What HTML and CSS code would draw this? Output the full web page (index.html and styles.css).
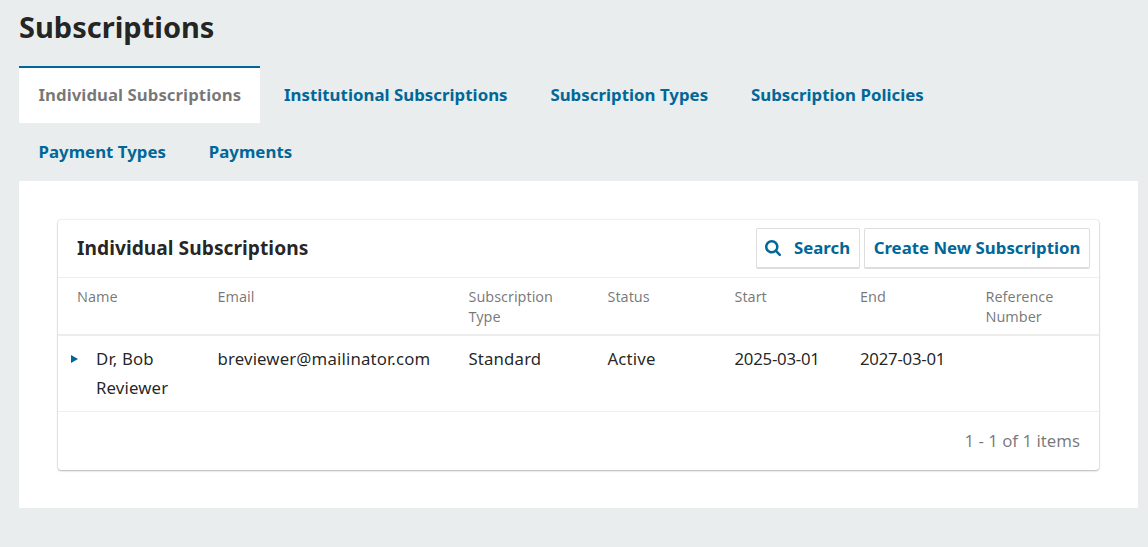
FILE: index.html
```html
<!DOCTYPE html>
<html lang="en">
<head>
<meta charset="utf-8">
<title>Subscriptions</title>
<link rel="stylesheet" href="styles.css">
</head>
<body>
<main class="page">
  <h1 class="page-title">Subscriptions</h1>
  <nav class="tabs">
    <a class="tab tab-active">Individual Subscriptions</a>
    <a class="tab">Institutional Subscriptions</a>
    <a class="tab">Subscription Types</a>
    <a class="tab">Subscription Policies</a>
    <a class="tab">Payment Types</a>
    <a class="tab">Payments</a>
  </nav>
  <section class="panel">
    <div class="grid-card">
      <header class="grid-header">
        <h2 class="grid-title">Individual Subscriptions</h2>
        <div class="actions">
          <button class="button button-search"><svg class="search-icon" viewBox="0 0 1664 1664"><path d="M1152 704q0-185-131.500-316.500T704 256 387.500 387.500 256 704t131.500 316.500T704 1152t316.500-131.500T1152 704zm512 832q0 52-38 90t-90 38q-54 0-90-38l-343-342q-179 124-399 124-143 0-273.500-55.500t-225-150-150-225T0 704t55.500-273.500 150-225 225-150T704 0t273.500 55.500 225 150 150 225T1408 704q0 220-124 399l343 343q37 37 37 90z"/></svg>Search</button>
          <button class="button">Create New Subscription</button>
        </div>
      </header>
      <table class="grid">
        <colgroup><col class="c-name"><col class="c-email"><col class="c-type"><col class="c-status"><col class="c-start"><col class="c-end"><col></colgroup>
        <thead><tr><th>Name</th><th>Email</th><th>Subscription<br>Type</th><th>Status</th><th>Start</th><th>End</th><th>Reference Number</th></tr></thead>
        <tbody><tr><td><div class="name"><svg class="caret" viewBox="0 0 7 8"><path d="M0 0 7 4 0 8z"/></svg><span>Dr, Bob Reviewer</span></div></td><td>breviewer@mailinator.com</td><td>Standard</td><td>Active</td><td class="date">2025-03-01</td><td class="date">2027-03-01</td><td></td></tr></tbody>
      </table>
      <footer class="grid-footer">1 - 1 of 1 items</footer>
    </div>
  </section>
</main>
</body>
</html>
```

FILE: styles.css
```css
* { box-sizing: border-box; }
body { margin: 0; background: #e9eded; color: rgba(0,0,0,.87); font-family: "Noto Sans", sans-serif; font-size: 16.8px; }
.page { padding: 7px 10px 39px 19px; }
.page-title { margin: 0; font-size: 29px; line-height: 40px; font-weight: 700; }
.tabs { display: flex; flex-wrap: wrap; margin-top: 19px; padding-right: 40px; column-gap: 4px; letter-spacing: .04px; }
.tab { height: 57px; padding: 0 19.300px 0 19.500px; line-height: 58px; font-weight: 700; color: #006798; }
.tab-active { background: #fff; color: rgba(0,0,0,.54); box-shadow: inset 0 2px #006798; }
.panel { margin-top: 1px; padding: 39px 39px 38px; background: #fff; }
.grid-card { border-radius: 3px; box-shadow: 0 0 2px rgba(0,0,0,.2), 0 1px 2px rgba(0,0,0,.24); }
.grid-header { display: flex; height: 57px; align-items: center; justify-content: space-between; padding: 0 9px 0 19px; }
.grid-title { margin: 0; padding-bottom: 2px; font-size: 19.2px; line-height: 28px; letter-spacing: .03px; }
.actions { display: flex; gap: 4px; }
.button { height: 41px; padding: 0 8.500px 1px 9px; border: 1px solid #ddd; border-bottom-width: 2px; border-radius: 2px; background: #fff; color: #006798; font: inherit; font-weight: 700; letter-spacing: .02px; white-space: nowrap; }
.button-search { display: flex; align-items: center; gap: 12.500px; padding-left: 8px; }
.search-icon { width: 16px; height: 16px; fill: currentColor; }
.grid { width: 100%; table-layout: fixed; border-collapse: separate; border-spacing: 0; border-top: 1px solid #eee; }
.c-name { width: 150.500px; }
.c-email { width: 251px; }
.c-type { width: 139px; }
.c-status { width: 127px; }
.c-start, .c-end { width: 125.500px; }
.grid th { height: 58px; padding: 9px 9px 7px; vertical-align: top; text-align: left; font-size: 14.4px; line-height: 20px; font-weight: 400; color: rgba(0,0,0,.54); border-bottom: 2px solid #ededed; }
.grid td { height: 76px; padding: 8px 9px; vertical-align: top; line-height: 29px; letter-spacing: .14px; border-bottom: 1px solid #eee; }
.grid .date { letter-spacing: -.25px; }
.grid th:first-child { padding-left: 19px; }
.grid td:first-child { padding-left: 13px; }
.name { display: flex; gap: 18px; }
.caret { width: 7px; height: 8px; flex: none; margin-top: 11px; fill: #006798; }
.grid-footer { height: 58px; padding-right: 19px; line-height: 58px; text-align: right; color: rgba(0,0,0,.54); }
```
